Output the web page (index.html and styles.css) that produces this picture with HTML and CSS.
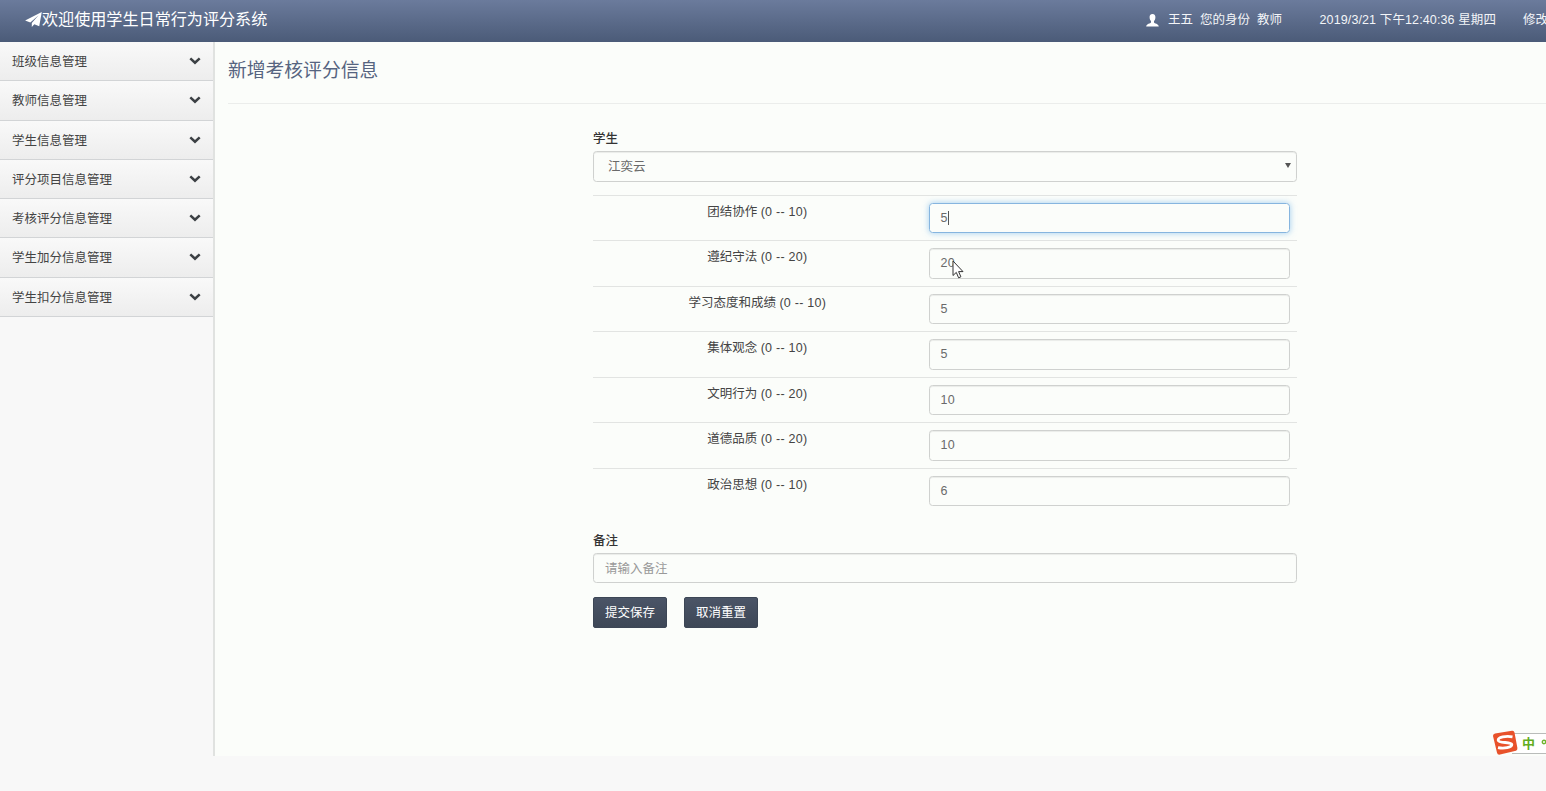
FILE: index.html
```html
<!DOCTYPE html>
<html lang="zh-CN">
<head>
<meta charset="utf-8">
<title>学生日常行为评分系统</title>
<link rel="stylesheet" href="styles.css">
</head>
<body>
<header class="navbar">
  <div class="brand">
    <svg class="plane" viewBox="0 0 16 14"><path d="M15.8 0 L13.4 13.4 L8.8 11.4 L6.4 14 V10.2 L12.8 3 L5 9.8 L0.1 7.9 Z" fill="#fff"/></svg><span>欢迎使用学生日常行为评分系统</span>
  </div>
  <div class="user">
    <svg class="person" viewBox="0 0 13 13"><path d="M6.500 0C8.600 0 9.500 1.500 9.400 3.400C9.300 5.200 8.700 6.200 8 7V8.600C8.400 9.500 12.600 10 12.800 12.600H.2C.4 10 4.600 9.500 5 8.600V7C4.300 6.200 3.700 5.200 3.600 3.400C3.500 1.500 4.400 0 6.500 0Z" fill="#fff"/></svg>
    <span class="who">王五</span><span class="role">您的身份</span><span>教师</span>
  </div>
  <span class="clock">2019/3/21 下午12:40:36 星期四</span>
  <span class="password">修改密码</span>
</header>
<div class="page">
  <nav class="sidebar">
    <a class="item">班级信息管理<svg class="chev" viewBox="0 0 12 8"><path d="M1.300 1.300L6 5.700L10.700 1.300"/></svg></a>
    <a class="item">教师信息管理<svg class="chev" viewBox="0 0 12 8"><path d="M1.300 1.300L6 5.700L10.700 1.300"/></svg></a>
    <a class="item">学生信息管理<svg class="chev" viewBox="0 0 12 8"><path d="M1.300 1.300L6 5.700L10.700 1.300"/></svg></a>
    <a class="item">评分项目信息管理<svg class="chev" viewBox="0 0 12 8"><path d="M1.300 1.300L6 5.700L10.700 1.300"/></svg></a>
    <a class="item">考核评分信息管理<svg class="chev" viewBox="0 0 12 8"><path d="M1.300 1.300L6 5.700L10.700 1.300"/></svg></a>
    <a class="item">学生加分信息管理<svg class="chev" viewBox="0 0 12 8"><path d="M1.300 1.300L6 5.700L10.700 1.300"/></svg></a>
    <a class="item">学生扣分信息管理<svg class="chev" viewBox="0 0 12 8"><path d="M1.300 1.300L6 5.700L10.700 1.300"/></svg></a>
  </nav>
  <main class="content">
    <h1 class="title">新增考核评分信息</h1>
    <div class="form">
      <div class="label">学生</div>
      <div class="control select"><span>江奕云</span><i class="arrow"></i></div>
      <div class="scores">
        <div class="row"><div class="name">团结协作 <span class="range">(0 -- 10)</span></div><div class="control focus">5<i class="caret"></i></div></div>
        <div class="row"><div class="name">遵纪守法 <span class="range">(0 -- 20)</span></div><div class="control">20<svg class="pointer" viewBox="0 0 12 19"><path d="M1 1V15.500L4.300 12.400L6.600 17.800L8.900 16.800L6.600 11.600H11Z" fill="#fff" stroke="#333" stroke-width="1"/></svg></div></div>
        <div class="row"><div class="name">学习态度和成绩 <span class="range">(0 -- 10)</span></div><div class="control">5</div></div>
        <div class="row"><div class="name">集体观念 <span class="range">(0 -- 10)</span></div><div class="control">5</div></div>
        <div class="row"><div class="name">文明行为 <span class="range">(0 -- 20)</span></div><div class="control">10</div></div>
        <div class="row"><div class="name">道德品质 <span class="range">(0 -- 20)</span></div><div class="control">10</div></div>
        <div class="row"><div class="name">政治思想 <span class="range">(0 -- 10)</span></div><div class="control">6</div></div>
      </div>
      <div class="label">备注</div>
      <div class="control remark">请输入备注</div>
      <div class="actions"><button class="btn">提交保存</button><button class="btn">取消重置</button></div>
    </div>
  </main>
</div>
<div class="ime">
  <svg class="sogou" viewBox="0 0 26 26"><path d="M3 3.500L20 .8Q22 .5 22.500 2.500L25.400 18Q25.600 20 24 20.800L8 24.600Q5.500 25 5 22.800L1 6Q.8 4 3 3.500Z" fill="#e8522b"/><path d="M20.500 6.800C14 5.700 5.800 7 6.200 10.300C6.600 13.300 19.500 11.700 19.800 14.500C20 17.500 12 18.800 6 17.600" fill="none" stroke="#fff" stroke-width="2.800"/></svg>
  <div class="ime-bar"><span>中</span><svg class="dots" viewBox="0 0 8 10"><circle cx="3" cy="3" r="1.700" fill="none" stroke="#6eb52f" stroke-width="1.400"/></svg></div>
</div>
</body>
</html>
```
FILE: styles.css
```css
* { box-sizing: border-box; }
body {
  margin: 0;
  height: 791px;
  overflow: hidden;
  background: #f8f8f8;
  color: #444;
  font: 12.5px/18px "Liberation Sans", "Noto Sans CJK SC", sans-serif;
}
.navbar {
  display: flex;
  align-items: center;
  height: 42px;
  padding: 0 0 2px 25px;
  white-space: nowrap;
  overflow: hidden;
  color: #f3f5f8;
  background: linear-gradient(#6b7b9c, #4b5b78);
}
.navbar > * { flex: none; }
.brand { display: flex; align-items: center; font-size: 16.1px; line-height: 24px; width: 1121px; padding-bottom: 2px; color: #fff; }
.plane { width: 17px; height: 15px; margin-top: 1px; }
.user { display: flex; align-items: center; width: 173.500px; }
.person { width: 13px; height: 13px; margin-right: 9px; }
.who { margin-right: 7px; }
.role { margin-right: 7px; }
.clock { width: 203.500px; letter-spacing: .12px; }
.page { display: flex; height: 714px; }
.sidebar { width: 215px; flex: none; border-right: 2px solid #e0e2e0; }
.item {
  display: flex;
  align-items: center;
  justify-content: space-between;
  height: 39.250px;
  padding: 2px 12px 0 12px;
  border-bottom: 1px solid #d2d4d6;
  background: linear-gradient(#f9f9f9, #ededed);
}
.chev { width: 12px; height: 8px; margin-bottom: 2px; fill: none; stroke: #3c4044; stroke-width: 2.500; }
.content { flex: 1; padding-left: 13px; background: #fbfdfa; overflow: hidden; }
.title {
  height: 62px;
  margin: 0;
  padding-top: 17px;
  border-bottom: 1px solid #ebedeb;
  font-size: 18.800px;
  font-weight: 400;
  line-height: 24px;
  color: #566480;
}
.form { width: 704px; margin: 25px 0 0 365px; }
.label { height: 22px; padding-top: 1px; font-weight: 500; color: #333; }
.control {
  display: flex;
  align-items: center;
  height: 30.500px;
  padding: 0 11px;
  border: 1px solid #cfd1cf;
  border-radius: 3.500px;
  box-shadow: inset 0 1px 1px rgba(0, 0, 0, .07);
  color: #6a6a6a;
}
.select { justify-content: space-between; padding: 2px 5px 0 14px; }
.arrow { border: 3px solid transparent; border-top: 5px solid #555; border-bottom: 0; margin-bottom: 4px; }
.scores { margin: 13px 0 17.500px; }
.row {
  display: grid;
  grid-template-columns: 328.500px 361px;
  column-gap: 7px;
  height: 45.550px;
  padding-top: 7px;
  border-top: 1px solid #e2e4e2;
}
.name { text-align: center; }
.range { letter-spacing: .25px; }
.row .control { position: relative; letter-spacing: .2px; }
.row .focus { border-color: #86b5df; box-shadow: 0 0 6px rgba(102, 175, 233, .6); }
.caret { width: 1px; height: 14px; background: #555; }
.pointer { position: absolute; left: 22px; top: 11px; width: 12px; height: 19px; }
.remark { padding-top: 1px; color: #999; }
.actions { display: flex; gap: 17px; margin-top: 13.500px; }
.btn {
  width: 74px;
  height: 31px;
  padding: 1px 0 0;
  border: 1px solid #3c4655;
  border-radius: 2px;
  color: #fff;
  font: inherit;
  background: linear-gradient(#4b5567, #3d4756);
}
.ime { position: absolute; right: 0; top: 730px; width: 54px; height: 26px; }
.sogou { position: absolute; left: 0; top: 0; width: 26px; height: 26px; z-index: 1; }
.ime-bar {
  display: flex;
  align-items: center;
  height: 21px;
  margin: 3px 0 0 20px;
  padding-left: 10px;
  border: 1px solid #b9bcba;
  border-width: 1px 0;
  background: #fff;
  color: #62ad22;
  font-weight: 700;
  font-size: 13px;
}
.dots { width: 8px; height: 10px; margin-left: 6px; flex: none; }
```
